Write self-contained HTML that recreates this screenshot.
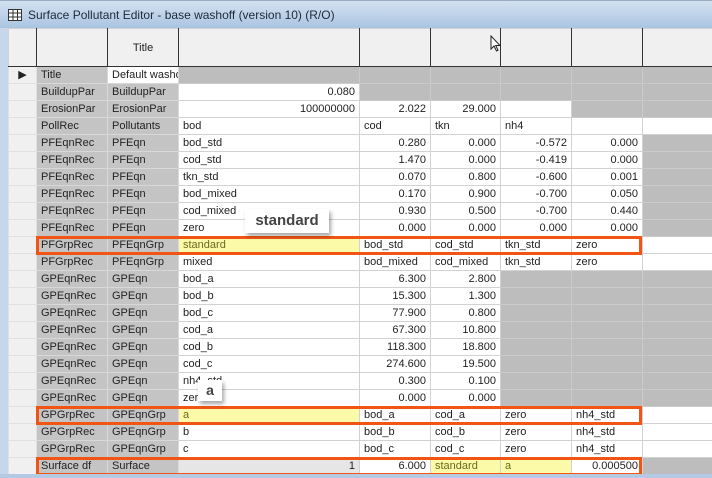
<!DOCTYPE html>
<html><head><meta charset="utf-8"><style>
body{margin:0;width:712px;height:478px;overflow:hidden;background:#fff;font-family:"Liberation Sans",sans-serif;position:relative}
.tb{position:absolute;left:0;top:0;width:712px;height:28px;background:linear-gradient(#d3e1f0,#aac4e2);border-top:1px solid #9aaac0;box-sizing:border-box}
.tb span{position:absolute;left:28px;top:7px;font-size:12px;color:#1e2a3a}
.frame{position:absolute;left:0;top:28px;width:8px;height:450px;background:#c6d7ec}
.bot{position:absolute;left:0;top:474px;width:712px;height:4px;background:#b4c9e4}
table{position:absolute;left:8px;top:28px;width:704px;border-collapse:collapse;table-layout:fixed;font-size:11px;color:#222}
td{height:16px;border:1px solid #d2d2d2;padding:0 4px;white-space:nowrap;overflow:hidden;background:#fff;line-height:16px}
tr.h td{height:37px;background:#f0f0f0;border-right:1px solid #333;border-bottom:1px solid #333;text-align:center}
td.i{background:#f0f0f0;border-color:#e0e0e0}
td.l{background:#c4c4c4;border-color:#d8d8d8}
td.l2{background:#c4c4c4;border-color:#d8d8d8 #d8d8d8 #d8d8d8 #333}
td.g{background:#bdbdbd;border-color:#cacaca}
td.r{text-align:right}
td.y{background:#fbfaa8;color:#6b6a1c}
td.lg{background:#e6e6e6;text-align:right}
.box{position:absolute;border:3px solid #f05514;box-sizing:border-box}
.tip{position:absolute;background:#fff;font-weight:bold;color:#444;box-shadow:2px 3px 4px rgba(0,0,0,.35);text-align:center}
</style></head><body>
<div class="tb"><svg style="position:absolute;left:8px;top:8px" width="14" height="12"><rect x=".5" y=".5" width="13" height="11" fill="#fff" stroke="#333"/><path d="M0 4H14M0 8H14M5 0V12M9.5 0V12" stroke="#333"/></svg><span>Surface Pollutant Editor - base washoff (version 10) (R/O)</span></div>
<div class="frame"></div>
<table>
<colgroup><col style="width:28px"><col style="width:71px"><col style="width:71px"><col style="width:181px"><col style="width:71px"><col style="width:70px"><col style="width:71px"><col style="width:71px"><col style="width:70px"></colgroup>
<tr class="h"><td></td><td></td><td>Title</td><td></td><td></td><td></td><td></td><td></td><td></td></tr>
<tr><td class="i" style="text-align:center">&#9654;</td><td class="l">Title</td><td class="l2" style="background:#fff">Default washoff</td><td class="g"></td><td class="g"></td><td class="g"></td><td class="g"></td><td class="g"></td><td class="g"></td></tr>
<tr><td class="i"></td><td class="l">BuildupPar</td><td class="l2">BuildupPar</td><td class="r">0.080</td><td class="g"></td><td class="g"></td><td class="g"></td><td class="g"></td><td class="g"></td></tr>
<tr><td class="i"></td><td class="l">ErosionPar</td><td class="l2">ErosionPar</td><td class="r">100000000</td><td class="r">2.022</td><td class="r">29.000</td><td></td><td class="g"></td><td class="g"></td></tr>
<tr><td class="i"></td><td class="l">PollRec</td><td class="l2">Pollutants</td><td>bod</td><td>cod</td><td>tkn</td><td>nh4</td><td></td><td></td></tr>
<tr><td class="i"></td><td class="l">PFEqnRec</td><td class="l2">PFEqn</td><td>bod_std</td><td class="r">0.280</td><td class="r">0.000</td><td class="r">-0.572</td><td class="r">0.000</td><td class="g"></td></tr>
<tr><td class="i"></td><td class="l">PFEqnRec</td><td class="l2">PFEqn</td><td>cod_std</td><td class="r">1.470</td><td class="r">0.000</td><td class="r">-0.419</td><td class="r">0.000</td><td class="g"></td></tr>
<tr><td class="i"></td><td class="l">PFEqnRec</td><td class="l2">PFEqn</td><td>tkn_std</td><td class="r">0.070</td><td class="r">0.800</td><td class="r">-0.600</td><td class="r">0.001</td><td class="g"></td></tr>
<tr><td class="i"></td><td class="l">PFEqnRec</td><td class="l2">PFEqn</td><td>bod_mixed</td><td class="r">0.170</td><td class="r">0.900</td><td class="r">-0.700</td><td class="r">0.050</td><td class="g"></td></tr>
<tr><td class="i"></td><td class="l">PFEqnRec</td><td class="l2">PFEqn</td><td>cod_mixed</td><td class="r">0.930</td><td class="r">0.500</td><td class="r">-0.700</td><td class="r">0.440</td><td class="g"></td></tr>
<tr><td class="i"></td><td class="l">PFEqnRec</td><td class="l2">PFEqn</td><td>zero</td><td class="r">0.000</td><td class="r">0.000</td><td class="r">0.000</td><td class="r">0.000</td><td class="g"></td></tr>
<tr><td class="i"></td><td class="l">PFGrpRec</td><td class="l2">PFEqnGrp</td><td class="y">standard</td><td>bod_std</td><td>cod_std</td><td>tkn_std</td><td>zero</td><td></td></tr>
<tr><td class="i"></td><td class="l">PFGrpRec</td><td class="l2">PFEqnGrp</td><td>mixed</td><td>bod_mixed</td><td>cod_mixed</td><td>tkn_std</td><td>zero</td><td></td></tr>
<tr><td class="i"></td><td class="l">GPEqnRec</td><td class="l2">GPEqn</td><td>bod_a</td><td class="r">6.300</td><td class="r">2.800</td><td class="g"></td><td class="g"></td><td class="g"></td></tr>
<tr><td class="i"></td><td class="l">GPEqnRec</td><td class="l2">GPEqn</td><td>bod_b</td><td class="r">15.300</td><td class="r">1.300</td><td class="g"></td><td class="g"></td><td class="g"></td></tr>
<tr><td class="i"></td><td class="l">GPEqnRec</td><td class="l2">GPEqn</td><td>bod_c</td><td class="r">77.900</td><td class="r">0.800</td><td class="g"></td><td class="g"></td><td class="g"></td></tr>
<tr><td class="i"></td><td class="l">GPEqnRec</td><td class="l2">GPEqn</td><td>cod_a</td><td class="r">67.300</td><td class="r">10.800</td><td class="g"></td><td class="g"></td><td class="g"></td></tr>
<tr><td class="i"></td><td class="l">GPEqnRec</td><td class="l2">GPEqn</td><td>cod_b</td><td class="r">118.300</td><td class="r">18.800</td><td class="g"></td><td class="g"></td><td class="g"></td></tr>
<tr><td class="i"></td><td class="l">GPEqnRec</td><td class="l2">GPEqn</td><td>cod_c</td><td class="r">274.600</td><td class="r">19.500</td><td class="g"></td><td class="g"></td><td class="g"></td></tr>
<tr><td class="i"></td><td class="l">GPEqnRec</td><td class="l2">GPEqn</td><td>nh4_std</td><td class="r">0.300</td><td class="r">0.100</td><td class="g"></td><td class="g"></td><td class="g"></td></tr>
<tr><td class="i"></td><td class="l">GPEqnRec</td><td class="l2">GPEqn</td><td>zero</td><td class="r">0.000</td><td class="r">0.000</td><td class="g"></td><td class="g"></td><td class="g"></td></tr>
<tr><td class="i"></td><td class="l">GPGrpRec</td><td class="l2">GPEqnGrp</td><td class="y">a</td><td>bod_a</td><td>cod_a</td><td>zero</td><td>nh4_std</td><td></td></tr>
<tr><td class="i"></td><td class="l">GPGrpRec</td><td class="l2">GPEqnGrp</td><td>b</td><td>bod_b</td><td>cod_b</td><td>zero</td><td>nh4_std</td><td></td></tr>
<tr><td class="i"></td><td class="l">GPGrpRec</td><td class="l2">GPEqnGrp</td><td>c</td><td>bod_c</td><td>cod_c</td><td>zero</td><td>nh4_std</td><td></td></tr>
<tr><td class="i"></td><td class="l">Surface df</td><td class="l2">Surface</td><td class="lg">1</td><td class="r">6.000</td><td class="y">standard</td><td class="y">a</td><td class="r">0.000500</td><td class="g"></td></tr>
</table>
<div class="box" style="left:36px;top:236px;width:606px;height:19px"></div>
<div class="box" style="left:36px;top:406px;width:606px;height:19px"></div>
<div class="box" style="left:36px;top:457px;width:606px;height:19px"></div>
<div class="tip" style="left:245px;top:209px;width:84px;height:24px;font-size:15px;line-height:24px">standard</div>
<div class="tip" style="left:198px;top:380px;width:24px;height:21px;font-size:14px;line-height:21px">a</div>
<svg style="position:absolute;left:490px;top:35px" width="12" height="18"><path d="M1 1V14L4 11L6.5 16L8 15.3L5.7 10.5H10Z" fill="#fff" stroke="#222" stroke-width="1"/></svg>
<div class="bot"></div>
</body></html>
